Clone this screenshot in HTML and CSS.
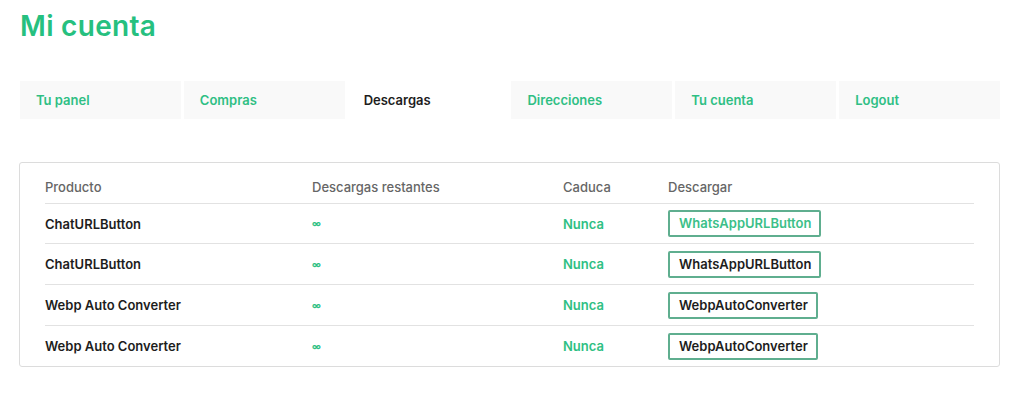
FILE: index.html
```html
<!DOCTYPE html>
<html lang="es">
<head>
  <meta charset="UTF-8"/>
  <meta name="viewport" content="width=device-width, initial-scale=1"/>
  <title>Mi cuenta</title>
  <link rel="stylesheet" href="styles.css">
</head>
<body>
  <div class="account">
    <h1 class="title">Mi cuenta</h1>
    <nav class="tabs">
      <a class="tab" href="#">Tu panel</a>
      <a class="tab" href="#">Compras</a>
      <a class="tab active" href="#">Descargas</a>
      <a class="tab" href="#">Direcciones</a>
      <a class="tab" href="#">Tu cuenta</a>
      <a class="tab" href="#">Logout</a>
    </nav>
    <div class="box">
      <table class="downloads">
        <thead>
          <tr>
            <th class="c-prod">Producto</th>
            <th class="c-rem">Descargas restantes</th>
            <th class="c-exp">Caduca</th>
            <th>Descargar</th>
          </tr>
        </thead>
        <tbody>
          <tr>
            <td class="name">ChatURLButton</td>
            <td class="inf">∞</td>
            <td class="never">Nunca</td>
            <td><a class="btn green" href="#">WhatsAppURLButton</a></td>
          </tr>
          <tr>
            <td class="name">ChatURLButton</td>
            <td class="inf">∞</td>
            <td class="never">Nunca</td>
            <td><a class="btn" href="#">WhatsAppURLButton</a></td>
          </tr>
          <tr>
            <td class="name">Webp Auto Converter</td>
            <td class="inf">∞</td>
            <td class="never">Nunca</td>
            <td><a class="btn" href="#">WebpAutoConverter</a></td>
          </tr>
          <tr>
            <td class="name">Webp Auto Converter</td>
            <td class="inf">∞</td>
            <td class="never">Nunca</td>
            <td><a class="btn" href="#">WebpAutoConverter</a></td>
          </tr>
        </tbody>
      </table>
    </div>
  </div>
</body>
</html>
```

FILE: styles.css
```css
body { margin:0; background:#fff; font-family:Inter,"Noto Sans",sans-serif; color:#222; }
.account { padding:0 24px 0 20px; }
.title { margin:0; padding-top:9px; height:81px; box-sizing:border-box; font-size:28px; font-weight:600; color:#26c07f; letter-spacing:0.3px; }
.tabs { display:flex; gap:3px; height:38px; }
.tab { flex:1; display:flex; align-items:center; padding-left:16px; background:#f9f9f9; color:#2fbf84; font-size:13px; font-weight:600; text-decoration:none; }
.tab.active { background:#fff; color:#1d1d1d; }
.box { margin:43px 0 0 -1px; border:1px solid #dcdcdc; border-radius:3px; padding:7px 25px 0 25px; }
.downloads { width:100%; border-collapse:collapse; font-size:13px; }
.downloads th { text-align:left; font-weight:500; color:#666; height:33px; padding:0; border-bottom:1px solid #e2e2e2; }
.downloads td { height:39px; padding:0; border-bottom:1px solid #e2e2e2; }
.downloads tbody tr:nth-child(n+2) td { height:40px; }
.downloads tbody tr:last-child td { border-bottom:none; }
.c-prod { width:267px; }
.c-rem { width:251px; }
.c-exp { width:105px; }
.name { font-weight:600; color:#1d1d1d; }
.inf { color:#2fbf84; font-size:9px; font-weight:700; }
.never { color:#2fbf84; font-weight:600; }
.btn { display:inline-block; padding:4px 8px 4px 9px; border:2px solid #5fae8f; border-radius:2px; color:#1d1d1d; font-weight:600; text-decoration:none; line-height:15px; }
.btn.green { color:#3cbf89; }
```
